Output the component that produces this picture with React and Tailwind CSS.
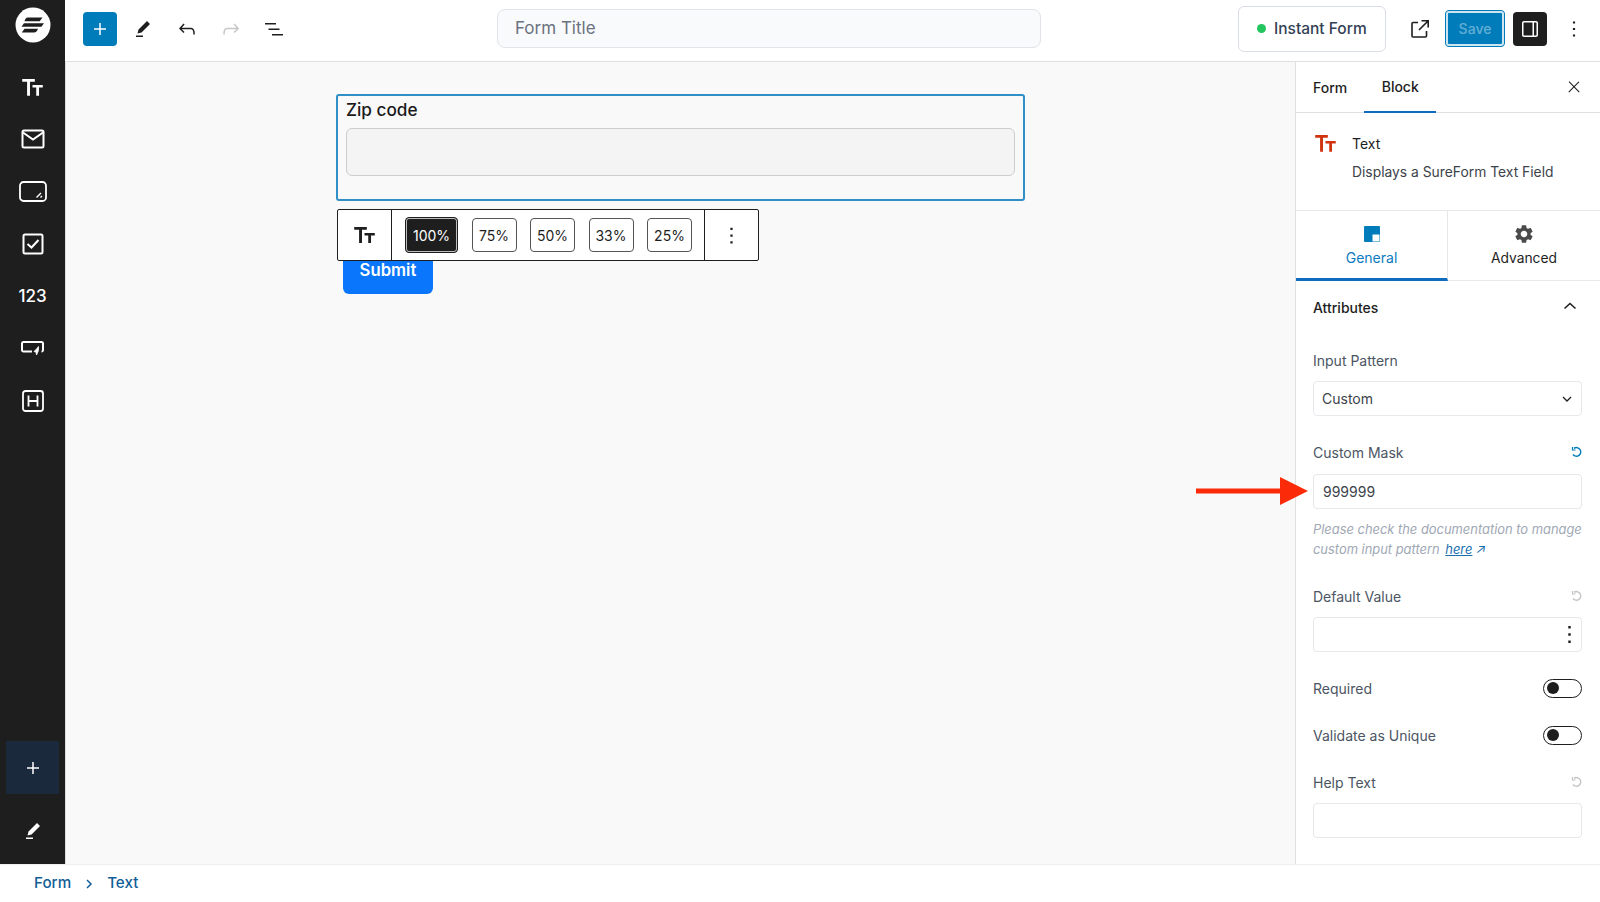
import React from "react";
import { MdSettings } from "react-icons/md";

const font = { fontFamily: "Inter, 'Liberation Sans', sans-serif" };

function Wp({ d, size = 24, className = "" }) {
  return (
    <svg width={size} height={size} viewBox="0 0 24 24" fill="currentColor" className={className}>
      <path d={d} />
    </svg>
  );
}

const icons = {
  plus: "M11.25 12.75V18h1.5v-5.25H18v-1.5h-5.25V6h-1.5v5.25H6v1.5h5.25Z",
  pencil: "m19 7-3-3-8.5 8.5-1 4 4-1L19 7Zm-7 11.5H5V20h7v-1.5Z",
  undo: "M18.3 11.7c-.6-.6-1.4-.9-2.3-.9H6.7l2.9-3.3-1.1-1-4.5 5L8.5 16l1-1-2.7-2.7H16c.5 0 .9.2 1.3.5 1 1 1 3.4 1 4.5v.3h1.5v-.2c0-1.5 0-4.3-1.5-5.7z",
  redo: "M15.6 6.5l-1.1 1 2.9 3.3H8c-.9 0-1.7.3-2.3.9-1.4 1.5-1.4 4.2-1.4 5.6v.2h1.5v-.3c0-1.1 0-3.5 1-4.5.3-.3.7-.5 1.3-.5h9.2L14.5 15l1.1 1.1 4.6-4.6-4.6-5z",
  list: "M3 6h11v1.5H3V6Zm3.5 5.5h11V13h-11v-1.5ZM21 17H10v1.5h11V17Z",
  close: "M13 11.8l6.1-6.3-1-1-6.1 6.2-6.1-6.3-1 1 6.1 6.3-6.5 6.7 1 1 6.5-6.6 6.5 6.6 1-1z",
  dots: "M13 19h-2v-2h2v2zm0-6h-2v-2h2v2zm0-6h-2V5h2v2z",
  panel: "M18 4H6c-1.1 0-2 .9-2 2v12c0 1.1.9 2 2 2h12c1.1 0 2-.9 2-2V6c0-1.1-.9-2-2-2zM6 5.5h8.5v13H6c-.3 0-.5-.2-.5-.5V6c0-.3.2-.5.5-.5zm12.5 12.5c0 .3-.2.5-.5.5h-2v-13h2c.3 0 .5.2.5.5v12z",
};

function TtIcon({ className = "", width = 22 }) {
  return (
    <svg width={width} height={width * 0.8} viewBox="0 0 22 18" fill="currentColor" className={className}>
      <path d="M0 0h13.5v3H8.3v15H5.2V3H0V0Z" />
      <path d="M11 6.5h11v2.6h-4v8.9h-3V9.1h-4V6.5Z" />
    </svg>
  );
}

function Logo() {
  return (
    <svg width="36" height="36" viewBox="0 0 36 36">
      <circle cx="18" cy="18" r="17.5" fill="#fff" />
      <path d="M13 10.500h14.500l-2.800 3.700H9.500c.6-2.200 1.500-3.700 3.500-3.700Z" fill="#1e1e1e" />
      <path d="M9 16.200h20l-2.600 3.600H6.500Z" fill="#1e1e1e" />
      <path d="M9.500 21.800h13.500c-.7 2.200-2 3.700-4 3.700H6.800Z" fill="#1e1e1e" />
    </svg>
  );
}

function RailIcon({ children }) {
  return <div className="h-[52.3px] flex items-center justify-center text-white">{children}</div>;
}

function Rail() {
  return (
    <aside className="w-[65px] shrink-0 bg-[#1e1e1e] flex flex-col items-stretch">
      <div className="h-[50px] flex items-center justify-center mb-[11px]">
        <Logo />
      </div>
      <RailIcon>
        <TtIcon width={21} />
      </RailIcon>
      <RailIcon>
        <svg width="24" height="20" viewBox="0 0 24 20" fill="none" stroke="currentColor" strokeWidth="2">
          <rect x="1.500" y="1.500" width="21" height="17" rx="1.500" />
          <path d="M2 3.500 12 10.500l10-7" />
        </svg>
      </RailIcon>
      <RailIcon>
        <svg width="28" height="21" viewBox="0 0 28 21" fill="none" stroke="currentColor" strokeWidth="1.800">
          <rect x="1" y="1" width="26" height="19" rx="3.500" />
          <path d="M17.500 16.500 22 12M21.500 16.500l1.500-1.500" strokeWidth="1.400" />
        </svg>
      </RailIcon>
      <RailIcon>
        <svg width="22" height="22" viewBox="0 0 22 22" fill="none" stroke="currentColor" strokeWidth="2">
          <rect x="1.500" y="1.500" width="19" height="19" rx="1.500" />
          <path d="m5.500 11 4 3.500 7-7.500" />
        </svg>
      </RailIcon>
      <RailIcon>
        <span className="text-[17px] font-medium">123</span>
      </RailIcon>
      <RailIcon>
        <svg width="23" height="15" viewBox="0 0 23 15" fill="none" stroke="currentColor" strokeWidth="2">
          <path d="M11 10.500H2.500a1.500 1.500 0 0 1-1.500-1V2.500A1.500 1.500 0 0 1 2.500 1h18A1.500 1.500 0 0 1 22 2.500v7a1.500 1.500 0 0 1-1.500 1" />
          <path d="M17.500 5.500 15.500 8l-2.500 2.500 2 .5.5 3 2-4.500Z" fill="currentColor" strokeWidth="0.800" />
        </svg>
      </RailIcon>
      <RailIcon>
        <svg width="22" height="22" viewBox="0 0 22 22" fill="none" stroke="currentColor" strokeWidth="1.800">
          <rect x="1" y="1" width="20" height="20" rx="2.500" />
          <path d="M6.500 5.500v11M15.500 5.500v11M6.500 11h9" />
        </svg>
      </RailIcon>
      <div className="mt-auto mx-[6px] h-[53px] bg-[#1a2a3c] flex items-center justify-center text-white mb-[25px]">
        <Wp d={icons.plus} size={24} />
      </div>
      <div className="flex justify-center text-white mb-[21px]">
        <Wp d={icons.pencil} size={24} />
      </div>
    </aside>
  );
}

function Header() {
  return (
    <header className="h-[62px] shrink-0 bg-white border-b border-[#e0e0e0] flex items-center pb-[4px]">
      <div className="w-[34px] h-[34px] ml-[18px] bg-[#007cba] rounded-sm flex items-center justify-center text-white">
        <Wp d={icons.plus} size={24} />
      </div>
      <div className="ml-[14px] text-[#1e1e1e] w-[24px]">
        <Wp d={icons.pencil} />
      </div>
      <div className="ml-[20px] text-[#1e1e1e] w-[24px]">
        <Wp d={icons.undo} />
      </div>
      <div className="ml-[20px] text-[#c8c8c8] w-[24px]">
        <Wp d={icons.redo} />
      </div>
      <div className="ml-[19px] text-[#1e1e1e] w-[24px]">
        <Wp d={icons.list} />
      </div>
      <div className="ml-[211px] w-[544px] h-[39px] bg-[#f9fafb] border border-[#e0e3e8] rounded-lg flex items-center px-[17px] text-[17px] text-[#6b7280]">
        Form Title
      </div>
      <div className="ml-[197px] w-[148px] h-[46px] border border-[#d9dde4] rounded-md flex items-center pl-[18px] gap-[8px] text-[#334155] text-[15.500px] font-medium">
        <span className="w-[9px] h-[9px] rounded-full bg-[#22c55e]" />
        Instant Form
      </div>
      <div className="ml-[24px] text-[#1e1e1e]">
        <svg width="20" height="20" viewBox="0 0 20 20" fill="none" stroke="currentColor" strokeWidth="1.600">
          <path d="M8 3.500H3a1 1 0 0 0-1 1V17a1 1 0 0 0 1 1h12.500a1 1 0 0 0 1-1v-5" />
          <path d="M9 11 18 2M11.500 1.800h6.700v6.700" />
        </svg>
      </div>
      <div className="ml-[15px] w-[60px] h-[37px] bg-[#007cba] rounded-sm border border-[#007cba] outline-2 -outline-offset-3 outline-white/80 flex items-center justify-center text-[14px] font-medium text-white/40">
        Save
      </div>
      <div className="ml-[8px] w-[34px] h-[34px] bg-[#1e1e1e] rounded-sm flex items-center justify-center text-white">
        <Wp d={icons.panel} />
      </div>
      <div className="ml-[14px] text-[#1e1e1e]">
        <Wp d={icons.dots} size={26} />
      </div>
    </header>
  );
}

function WidthButton({ label, active }) {
  return (
    <div
      className={
        active
          ? "w-[53px] h-[36px] rounded-sm bg-[#1e1e1e] border border-[#1e1e1e] outline outline-1 -outline-offset-2 outline-white/70 text-white text-[14px] flex items-center justify-center"
          : "w-[45px] h-[34px] rounded-sm bg-white border border-[#555] text-[#1e1e1e] text-[14px] flex items-center justify-center"
      }
    >
      {label}
    </div>
  );
}

function Canvas() {
  return (
    <main className="flex-1 bg-[#f9f9f9] pl-[270px] pt-[32px] relative border-l border-[#ddd]">
      <div className="w-[689px] h-[107px] border-2 border-[#2f8fc6] rounded-[3px] px-[8px]">
        <div className="text-[17.200px] font-medium leading-[24px] text-[#1a1a1a] mt-[2px]">Zip code</div>
        <div className="h-[48px] mt-[6px] bg-[#f4f4f4] border border-[#cdcdcd] rounded-md" />
      </div>
      <div className="ml-[7px] mt-[47px] w-[90px] h-[46px] bg-[#0a76fb] rounded-md text-white text-[16.700px] font-semibold flex items-start justify-center pt-[10px] leading-[24px]">
        Submit
      </div>
      {/* block toolbar floats over the submit button */}
      <div className="absolute left-[270px] top-[147px] ml-[1px] w-[422px] h-[52px] bg-white border border-[#1e1e1e] rounded-[2px] flex items-center">
        <div className="w-[54px] h-full flex items-center justify-center border-r border-[#1e1e1e] text-[#1e1e1e]">
          <TtIcon width={21} />
        </div>
        <div className="flex-1 h-full flex items-center pl-[13px] gap-[13.500px] border-r border-[#1e1e1e]">
          <WidthButton label="100%" active />
          <WidthButton label="75%" />
          <WidthButton label="50%" />
          <WidthButton label="33%" />
          <WidthButton label="25%" />
        </div>
        <div className="w-[53px] flex items-center justify-center text-[#1e1e1e]">
          <Wp d={icons.dots} size={27} />
        </div>
      </div>
    </main>
  );
}

function ResetIcon({ className }) {
  return (
    <svg width="12" height="12" viewBox="0 0 12 12" fill="none" stroke="currentColor" strokeWidth="1.500" className={className}>
      <path d="M3 2.300A4.300 4.300 0 1 1 2 8.500" />
      <path d="M1.500 1v3h3" strokeWidth="1.200" />
    </svg>
  );
}

function FieldLabel({ label, reset }) {
  return (
    <div className="flex items-center justify-between -mr-[1px] h-[20px]">
      <span className="text-[14px] text-[#4b5563]">{label}</span>
      {reset && <ResetIcon className={reset} />}
    </div>
  );
}

function Toggle({ label, className }) {
  return (
    <div className={"flex items-center justify-between h-[20px] " + className}>
      <span className="text-[14px] text-[#4b5563]">{label}</span>
      <div className="w-[39px] h-[19px] rounded-full border border-[#1e1e1e] bg-white flex items-center pl-[3px]">
        <span className="w-[12px] h-[12px] rounded-full bg-[#1e1e1e]" />
      </div>
    </div>
  );
}

function Panel() {
  return (
    <aside className="w-[305px] shrink-0 bg-white border-l border-[#e0e0e0] flex flex-col overflow-hidden">
      <div className="h-[51px] shrink-0 border-b border-[#e0e0e0] flex items-center text-[14px] text-[#1e1e1e]">
        <span className="ml-[17px] font-medium">Form</span>
        <div className="ml-[17px] w-[72px] h-[51px] border-b-2 border-[#0f6cbd] flex items-center justify-center font-medium">
          Block
        </div>
        <Wp d={icons.close} size={18} className="ml-auto mr-[17px]" />
      </div>
      <div className="h-[98px] shrink-0 border-b border-[#e8e8e8] flex pl-[19px] pt-[22px]">
        <TtIcon width={21} className="text-[#d1330f] shrink-0" />
        <div className="ml-[16px] -mt-[1px] text-[14px] text-[#1e1e1e]">
          <div className="leading-[20px]">Text</div>
          <div className="mt-[8px] leading-[20px] text-[13.850px] text-[#3c434a]">Displays a SureForm Text Field</div>
        </div>
      </div>
      <div className="h-[70px] shrink-0 flex border-b border-[#e8e8e8]">
        <div className="w-[152px] border-r border-[#e8e8e8] -mb-[1px] border-b-[3px] border-b-[#0f6cbd] flex flex-col items-center pt-[15px] text-[#0a7bc0]">
          <svg width="16" height="16" viewBox="0 0 16 16">
            <rect width="16" height="16" rx="1" fill="#007cba" />
            <rect x="8.500" y="8.500" width="7" height="7" fill="#fff" />
          </svg>
          <span className="text-[14px] mt-[6px] leading-[20px]">General</span>
        </div>
        <div className="flex-1 flex flex-col items-center pt-[12px] text-[#1e1e1e]">
          <MdSettings size={22} className="text-[#4b4b4b]" />
          <span className="text-[13.800px] mt-[3px] leading-[20px]">Advanced</span>
        </div>
      </div>
      <div className="pl-[17px] pr-[18px]">
        <div className="flex items-center justify-between h-[20px] mt-[16px] text-[14px] font-medium text-[#1e1e1e]">
          Attributes
          <svg width="14" height="8" viewBox="0 0 14 8" fill="none" stroke="currentColor" strokeWidth="1.600" className="mr-[5px] -mt-[3px]">
            <path d="M1.500 6.500 7 1.500l5.500 5" />
          </svg>
        </div>
        <div className="mt-[33px]">
          <FieldLabel label="Input Pattern" />
        </div>
        <div className="mt-[11px] h-[35px] border border-[#e6e8eb] rounded-sm flex items-center justify-between pl-[8px] pr-[9px] text-[14px] text-[#3c434a]">
          Custom
          <svg width="10" height="6" viewBox="0 0 10 6" fill="none" stroke="#1e1e1e" strokeWidth="1.300">
            <path d="m1 1 4 4 4-4" />
          </svg>
        </div>
        <div className="mt-[26px]">
          <FieldLabel label="Custom Mask" reset="text-[#007cba]" />
        </div>
        <div className="mt-[12px] h-[35px] border border-[#e6e8eb] rounded-sm flex items-center px-[9px] text-[14px] text-[#3c434a]">
          999999
        </div>
        <p className="mt-[11px] text-[12.900px] leading-[20px] italic text-[#a0a8b4] whitespace-nowrap">
          Please check the documentation to manage
          <br />
          custom input pattern{" "}
          <span className="ml-[2px] text-[#1a6fb0] underline">here</span>{" "}
          <span className="text-[#1a6fb0]">↗</span>
        </p>
        <div className="mt-[26px]">
          <FieldLabel label="Default Value" reset="text-[#c4c4c4]" />
        </div>
        <div className="mt-[11px] h-[35px] border border-[#e6e8eb] rounded-sm flex items-center justify-end text-[#1e1e1e]">
          <Wp d={icons.dots} size={29} className="-mr-[3px]" />
        </div>
        <Toggle label="Required" className="mt-[26px]" />
        <Toggle label="Validate as Unique" className="mt-[27px]" />
        <div className="mt-[27px]">
          <FieldLabel label="Help Text" reset="text-[#c4c4c4]" />
        </div>
        <div className="mt-[11px] h-[35px] border border-[#e6e8eb] rounded-sm" />
      </div>
    </aside>
  );
}

export default function App() {
  return (
    <div className="w-[1600px] h-[902px] relative overflow-hidden flex flex-col bg-white" style={font}>
      <div className="h-[864px] flex shrink-0">
        <Rail />
        <div className="flex-1 flex flex-col min-w-0">
          <Header />
          <div className="flex-1 flex min-h-0">
            <Canvas />
            <Panel />
          </div>
        </div>
      </div>
      <footer className="h-[38px] border-t border-[#eeeeee] flex items-center pl-[34px] text-[15.200px] font-medium text-[#135e96]">
        Form
        <svg width="8" height="10" viewBox="0 0 8 10" fill="none" stroke="currentColor" strokeWidth="1.500" className="mx-[14px]">
          <path d="m2 1 4 4-4 4" />
        </svg>
        Text
      </footer>
      {/* annotation arrow */}
      <svg width="112" height="28" viewBox="0 0 112 28" className="absolute left-[1196px] top-[477px]">
        <path d="M0 11.500h84V0l28 14-28 14V16.500H0Z" fill="#fb2a08" />
      </svg>
    </div>
  );
}
